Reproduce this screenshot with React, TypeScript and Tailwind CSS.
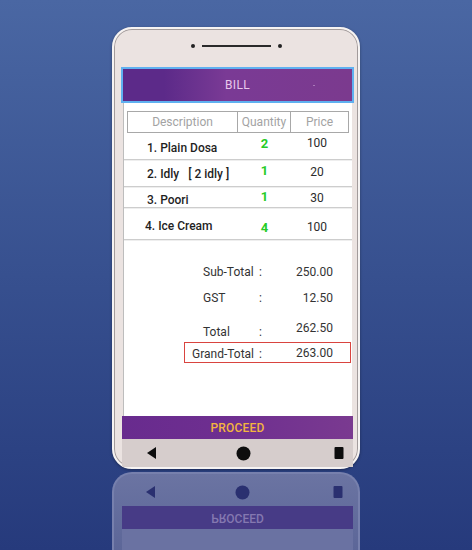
import React from 'react';

const rows = [
  { desc: '1. Plain Dosa', qty: '2', price: '100', h: 'h-[27px]', dp: 'pt-[8px] pl-[23px]', qp: 'pt-[4px]', pp: 'pt-[3px]' },
  { desc: '2. Idly\u00a0\u00a0\u00a0[ 2 idly ]', qty: '1', price: '20', h: 'h-[27px]', dp: 'pt-[7px] pl-[23px]', qp: 'pt-[4px]', pp: 'pt-[5px]' },
  { desc: '3. Poori', qty: '1', price: '30', h: 'h-[21px]', dp: 'pt-[6px] pl-[23px]', qp: 'pt-[3px]', pp: 'pt-[4px]' },
  { desc: '4. Ice Cream', qty: '4', price: '100', h: 'h-[32px]', dp: 'pt-[11px] pl-[21px]', qp: 'pt-[13px]', pp: 'pt-[12px]' },
];

const NavIcons = ({ color }: { color: string }) => (
  <div className="h-[28px] flex items-center">
    <svg width="10" height="12" viewBox="0 0 10 12" className="ml-[25px]">
      <polygon points="9,0 9,12 0,6" fill={color} />
    </svg>
    <svg width="15" height="15" viewBox="0 0 15 15" className="ml-[79px]">
      <circle cx="7.5" cy="7.5" r="7" fill={color} />
    </svg>
    <svg width="10" height="12" viewBox="0 0 10 12" className="ml-[83px]">
      <rect x="0.5" y="0" width="9" height="12" rx="1" fill={color} />
    </svg>
  </div>
);

export default function App() {
  return (
    <div
      className="w-[472px] h-[550px] overflow-hidden flex flex-col items-center pt-[27px] bg-gradient-to-b from-[#4a67a3] via-[#37508f] to-[#263a7c]"
      style={{ fontFamily: 'Roboto, "Liberation Sans", sans-serif' }}
    >
      {/* phone */}
      <div className="w-[248px] h-[445px] rounded-[20px] border-2 border-[#f6f3f2] bg-[#ebe3e1] shadow-[inset_0_0_0_1px_#a29b9b,0_1px_3px_rgba(0,0,0,0.35)] flex flex-col">
        <div className="h-[38px] flex items-center justify-center gap-[7px] pb-[4px]">
          <span className="w-[4px] h-[4px] rounded-full bg-[#222]" />
          <span className="w-[69px] h-[1.5px] bg-[#2a2a2a]" />
          <span className="w-[4px] h-[4px] rounded-full bg-[#222]" />
        </div>

        <div className="ml-[7px] w-[233px] flex flex-col">
          {/* header */}
          <div className="h-[36px] border-2 border-[#5fb0f0] bg-gradient-to-r from-[#5c2a89] from-[18%] via-[#7a3a95] via-[45%] to-[#7b3a8e] flex items-center justify-center relative">
            <span className="text-[12px] text-[#e8c9ec] tracking-[0.3px]">BILL</span>
            <span className="absolute left-[190px] top-[16px] w-[2px] h-[1px] bg-[#a978b8]" />
          </div>

          {/* body */}
          <div className="mx-[2px] h-[313px] bg-white border-l border-[#bdbdbd] flex flex-col">
            <div className="mt-[8px] ml-[3px] w-[222px] h-[22px] border border-[#a8a8a8] flex text-[12px] text-[#a3a3a3]">
              <div className="w-[110px] border-r border-[#a8a8a8] flex items-center justify-center">Description</div>
              <div className="w-[53px] border-r border-[#a8a8a8] flex items-center justify-center">Quantity</div>
              <div className="flex-1 flex items-center justify-center">Price</div>
            </div>

            {rows.map((r) => (
              <div key={r.desc} className={`${r.h} flex border-b border-[#cdcdcd] shadow-[0_1px_0_#eeeeee]`}>
                <div className={`w-[114px] text-[12px] leading-[14px] font-medium text-[#1f1f1f] whitespace-nowrap ${r.dp}`}>{r.desc}</div>
                <div className={`w-[53px] text-center text-[13px] leading-[14px] font-bold text-[#26cc26] ${r.qp}`}>{r.qty}</div>
                <div className={`w-[52px] text-center text-[12px] leading-[14px] text-[#2b2b2b] ${r.pp}`}>{r.price}</div>
              </div>
            ))}

            {/* totals */}
            <div className="ml-[60px] w-[167px] flex flex-col text-[12px] text-[#333]">
              <div className="mt-[22px] h-[20px] flex items-center pl-[19px] pr-[18px]">
                <span className="w-[56px]">Sub-Total</span>
                <span>:</span>
                <span className="flex-1 text-right">250.00</span>
              </div>
              <div className="mt-[6px] h-[20px] flex items-center pl-[19px] pr-[18px]">
                <span className="w-[56px]">GST</span>
                <span>:</span>
                <span className="flex-1 text-right">12.50</span>
              </div>
              <div className="mt-[10px] h-[24px] flex items-center pl-[19px] pr-[18px]">
                <span className="w-[56px] pt-[4px]">Total</span>
                <span className="pt-[4px]">:</span>
                <span className="flex-1 text-right pb-[4px]">262.50</span>
              </div>
              <div className="mt-[0px] h-[21px] border border-[#d9443f] flex items-center pl-[7px] pr-[17px]">
                <span className="w-[67px] pt-[3px]">Grand-Total</span>
                <span className="pt-[3px]">:</span>
                <span className="flex-1 text-right">263.00</span>
              </div>
            </div>
          </div>

          {/* proceed */}
          <div className="ml-[1px] w-[231px] h-[23px] bg-gradient-to-r from-[#682b8e] via-[#6f2f90] to-[#7a3a90] flex items-center justify-center">
            <span className="text-[12px] font-medium text-[#f3b53f] tracking-[0.2px]">PROCEED</span>
          </div>
          <div className="ml-[1px] w-[231px] bg-[#d6cdcc]">
            <NavIcons color="#0d0d0d" />
          </div>
        </div>
      </div>

      {/* reflection */}
      <div className="mt-[3px] w-[248px] h-[80px] rounded-t-[20px] border-2 border-b-0 border-[#7780ad] bg-gradient-to-b from-[#6b74a2] to-[#5c6698] flex flex-col">
        <div className="h-[4px]" />
        <div className="ml-[7px] w-[233px]">
          <NavIcons color="#2a3070" />
        </div>
        <div className="ml-[8px] w-[231px] h-[23px] bg-[#473b86] flex items-center justify-center">
          <span className="text-[12px] font-medium text-[#8478b0] -scale-y-100">PROCEED</span>
        </div>
        <div className="ml-[8px] w-[231px] flex-1 bg-[#6a72a2]" />
      </div>
    </div>
  );
}
